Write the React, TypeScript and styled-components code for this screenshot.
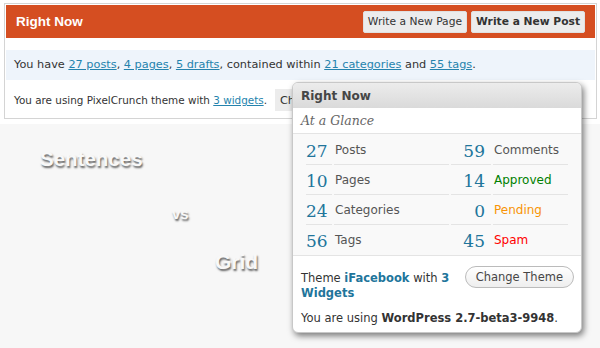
import styled, { createGlobalStyle } from "styled-components";

const GlobalStyle = createGlobalStyle`
  html, body {
    margin: 0;
    padding: 0;
    background: #f7f7f7;
  }
  body {
    font-family: "DejaVu Sans", "Liberation Sans", sans-serif;
  }
`;

const Page = styled.div`
  position: relative;
  width: 600px;
  height: 348px;
  overflow: hidden;
  background: #f7f7f7;
`;

const TopArea = styled.div`
  background: #fff;
  height: 124px;
  padding: 3px 3px 0 4px;
  box-sizing: border-box;
`;

const Panel = styled.div`
  border: 1px solid #d4d4d4;
  padding: 1px;
  height: 116px;
  box-sizing: border-box;
  background: #fff;
`;

const Header = styled.div`
  height: 33px;
  background: #d54e21;
  display: flex;
  align-items: center;
  justify-content: space-between;
  padding: 0 10px;
  box-sizing: border-box;
`;

const HeaderTitle = styled.h3`
  margin: 0;
  color: #fff;
  font-family: "Liberation Sans", Arial, sans-serif;
  font-size: 13.5px;
  font-weight: bold;
`;

const HeaderButtons = styled.div`
  display: flex;
  gap: 4px;
`;

const HeadButton = styled.button<{ $strong?: boolean }>`
  height: 22px;
  padding: 0 4px;
  border: 1px solid #e0e0e0;
  border-radius: 2px;
  background: #ececec;
  color: #333;
  font-family: "DejaVu Sans", sans-serif;
  font-size: 10.7px;
  font-weight: ${(p) => (p.$strong ? "bold" : "normal")};
`;

const SummaryRow = styled.p`
  margin: 12px 0 0;
  height: 30px;
  line-height: 30px;
  background: #eef4fb;
  padding-left: 8px;
  font-size: 11.3px;
  color: #333;
  white-space: nowrap;
`;

const ThemeRow = styled.div`
  margin-top: 9px;
  height: 22px;
  display: flex;
  align-items: center;
  padding-left: 8px;
  font-size: 10.4px;
  color: #333;
  white-space: nowrap;
`;

const Link = styled.a`
  color: #2583ad;
  text-decoration: underline;
`;

const GreyButton = styled.span`
  margin-left: 8px;
  height: 22px;
  padding: 0 5px;
  background: #ececec;
  display: flex;
  align-items: center;
  font-size: 11.3px;
  color: #333;
`;

const Labels = styled.div`
  display: flex;
  flex-direction: column;
  align-items: flex-start;
`;

const Label = styled.span<{ $indent: number; $top: number; $size: number }>`
  margin-left: ${(p) => p.$indent}px;
  margin-top: ${(p) => p.$top}px;
  font-family: "Liberation Sans", Arial, sans-serif;
  font-weight: bold;
  font-size: ${(p) => p.$size}px;
  color: #f8f8f8;
  text-shadow: 1px 2px 2px rgba(0, 0, 0, 0.6);
  line-height: 1;
`;

const Widget = styled.div`
  position: absolute;
  left: 292px;
  top: 82px;
  width: 290px;
  height: 251px;
  box-sizing: border-box;
  border: 1px solid #c8c8c8;
  border-radius: 6px;
  background: #fff;
  box-shadow: 2px 3px 6px rgba(0, 0, 0, 0.5);
  overflow: hidden;
`;

const WidgetHead = styled.div`
  height: 25px;
  background: linear-gradient(#ececec, #dadada);
  display: flex;
  align-items: center;
  padding-left: 8px;
  font-size: 12px;
  font-weight: bold;
  color: #464646;
`;

const Glance = styled.div`
  height: 25px;
  display: flex;
  align-items: center;
  padding-left: 8px;
  font-family: "DejaVu Serif", "Liberation Serif", serif;
  font-style: italic;
  font-size: 12.5px;
  color: #666;
  border-bottom: 1px solid #e4e4e4;
`;

const Table = styled.div`
  background: #f9f9f9;
  padding: 1px 13px 0 13px;
  display: grid;
  grid-template-columns: 26px 115px 40px 75px;
  grid-auto-rows: 30px;
  column-gap: 2px;
  border-bottom: 1px solid #e4e4e4;
`;

const Cell = styled.div<{ $last?: boolean }>`
  display: flex;
  align-items: center;
  border-bottom: ${(p) => (p.$last ? "none" : "1px solid #e4e4e4")};
  box-sizing: border-box;
`;

const NumCell = styled(Cell)<{ $right?: boolean }>`
  justify-content: ${(p) => (p.$right ? "flex-end" : "flex-start")};
  padding-right: ${(p) => (p.$right ? "6px" : "0")};
  font-family: "DejaVu Serif", "Liberation Serif", serif;
  font-size: 17px;
  color: #21759b;
  padding-top: 2px;
`;

const TextCell = styled(Cell)<{ $tone?: string }>`
  font-size: 12px;
  color: ${(p) => p.$tone || "#555"};
  padding-left: 1px;
`;

const Footer = styled.div`
  padding: 10px 8px 0 8px;
`;

const FooterRow = styled.div`
  display: flex;
  justify-content: space-between;
  align-items: flex-start;
`;

const ThemeText = styled.p`
  margin: 5px 0 0;
  width: 160px;
  font-size: 11.5px;
  line-height: 15px;
  color: #333;
`;

const Strong = styled.a`
  color: #21759b;
  font-weight: bold;
  text-decoration: none;
`;

const PillButton = styled.button`
  height: 22px;
  padding: 0 10px;
  border: 1px solid #bbb;
  border-radius: 11px;
  background: linear-gradient(#fff, #eee);
  color: #464646;
  font-family: "DejaVu Sans", sans-serif;
  font-size: 11.5px;
  margin-right: -1px;
`;

const Version = styled.p`
  margin: 10px 0 0;
  font-size: 11.5px;
  color: #333;
  b {
    font-weight: bold;
  }
`;

const stats = [
  { n: "27", label: "Posts", n2: "59", label2: "Comments" },
  { n: "10", label: "Pages", n2: "14", label2: "Approved", tone: "#008000" },
  { n: "24", label: "Categories", n2: "0", label2: "Pending", tone: "#f89406" },
  { n: "56", label: "Tags", n2: "45", label2: "Spam", tone: "#ff0000" },
];

export default function App() {
  return (
    <>
      <GlobalStyle />
      <Page>
        <TopArea>
          <Panel>
            <Header>
              <HeaderTitle>Right Now</HeaderTitle>
              <HeaderButtons>
                <HeadButton>Write a New Page</HeadButton>
                <HeadButton $strong>Write a New Post</HeadButton>
              </HeaderButtons>
            </Header>
            <SummaryRow>
              You have <Link>27 posts</Link>, <Link>4 pages</Link>, <Link>5 drafts</Link>, contained
              within <Link>21 categories</Link> and <Link>55 tags</Link>.
            </SummaryRow>
            <ThemeRow>
              <span>
                You are using PixelCrunch theme with <Link>3 widgets</Link>.
              </span>
              <GreyButton>Change Theme</GreyButton>
            </ThemeRow>
          </Panel>
        </TopArea>
        <Labels>
          <Label $indent={40} $top={25} $size={20.5}>
            Sentences
          </Label>
          <Label $indent={172} $top={36} $size={15}>
            vs
          </Label>
          <Label $indent={215} $top={30} $size={21}>
            Grid
          </Label>
        </Labels>
        <Widget>
          <WidgetHead>Right Now</WidgetHead>
          <Glance>At a Glance</Glance>
          <Table>
            {stats.map((s, i) => {
              const last = i === stats.length - 1;
              return [
                <NumCell key={i + "a"} $last={last}>
                  {s.n}
                </NumCell>,
                <TextCell key={i + "b"} $last={last}>
                  {s.label}
                </TextCell>,
                <NumCell key={i + "c"} $last={last} $right>
                  {s.n2}
                </NumCell>,
                <TextCell key={i + "d"} $last={last} $tone={s.tone}>
                  {s.label2}
                </TextCell>,
              ];
            })}
          </Table>
          <Footer>
            <FooterRow>
              <ThemeText>
                Theme <Strong>iFacebook</Strong> with <Strong>3</Strong>
                <br />
                <Strong>Widgets</Strong>
              </ThemeText>
              <PillButton>Change Theme</PillButton>
            </FooterRow>
            <Version>
              You are using <b>WordPress 2.7-beta3-9948</b>.
            </Version>
          </Footer>
        </Widget>
      </Page>
    </>
  );
}
